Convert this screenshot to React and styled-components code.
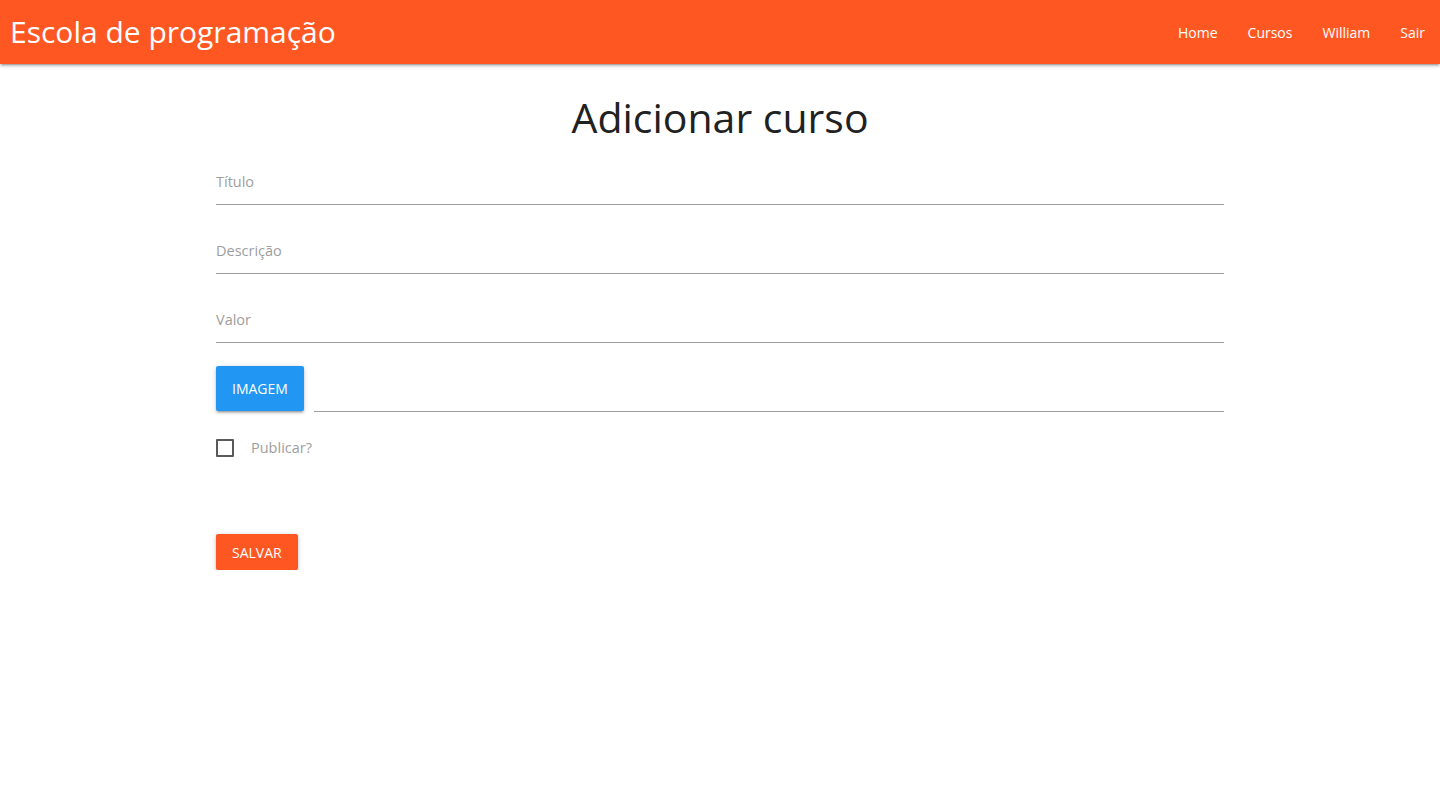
import styled, { createGlobalStyle } from "styled-components";

const colors = {
  primary: "#ff5722",
  blue: "#2196f3",
  label: "#9e9e9e",
  line: "#9e9e9e",
  text: "#212121",
};

const font = `"Open Sans", "Noto Sans", sans-serif`;

const GlobalStyle = createGlobalStyle`
  html, body {
    margin: 0;
    padding: 0;
    background: #fff;
    font-family: ${font};
    font-size: 15px;
  }
  * {
    box-sizing: border-box;
  }
`;

const Nav = styled.nav`
  height: 64px;
  background-color: ${colors.primary};
  display: flex;
  align-items: center;
  justify-content: space-between;
  box-shadow: 0 2px 2px 0 rgba(0, 0, 0, 0.14), 0 3px 1px -2px rgba(0, 0, 0, 0.12),
    0 1px 5px 0 rgba(0, 0, 0, 0.2);
  color: #fff;
`;

const Brand = styled.a`
  padding-left: 10px;
  font-size: 30px;
  color: #fff;
  text-decoration: none;
  line-height: 64px;
`;

const Links = styled.ul`
  display: flex;
  list-style: none;
  margin: 0;
  padding: 0;

  a {
    display: block;
    padding: 2px 15px 0;
    line-height: 62px;
    font-size: 14px;
    color: #fff;
    text-decoration: none;
  }
`;

const Container = styled.main`
  width: 70%;
  margin: 0 auto;
`;

const Heading = styled.h3`
  margin: 30px 0 18px;
  height: 47px;
  font-size: 41px;
  font-weight: 400;
  line-height: 47px;
  text-align: center;
  color: ${colors.text};
`;

const Field = styled.div`
  display: flex;
  align-items: flex-end;
  margin-bottom: 23px;
`;

const Input = styled.input`
  flex: 1;
  height: 46px;
  padding: 0;
  border: none;
  border-bottom: 1px solid ${colors.line};
  outline: none;
  background: transparent;
  font-family: ${font};
  font-size: 14.5px;
  color: ${colors.text};

  &::placeholder {
    color: ${colors.label};
  }
`;

const FileButton = styled.span`
  display: block;
  height: 45px;
  line-height: 45px;
  padding: 0 16px;
  margin-right: 10px;
  margin-bottom: 1px;
  border-radius: 2px;
  background-color: ${colors.blue};
  color: #fff;
  font-size: 14px;
  text-transform: uppercase;
  box-shadow: 0 2px 2px 0 rgba(0, 0, 0, 0.14), 0 3px 1px -2px rgba(0, 0, 0, 0.12),
    0 1px 5px 0 rgba(0, 0, 0, 0.2);
`;

const Check = styled.label`
  display: flex;
  align-items: center;
  height: 25px;
  margin-top: 22px;
  font-size: 14.5px;
  color: ${colors.label};
  cursor: pointer;

  span.box {
    width: 18px;
    height: 18px;
    border: 2px solid #5a5a5a;
    border-radius: 1px;
    margin-right: 17px;
  }
`;

const Button = styled.button`
  display: block;
  margin-top: 74px;
  height: 36px;
  padding: 0 16px;
  border: none;
  border-radius: 2px;
  background-color: ${colors.primary};
  color: #fff;
  font-family: ${font};
  font-size: 14px;
  text-transform: uppercase;
  box-shadow: 0 2px 2px 0 rgba(0, 0, 0, 0.14), 0 3px 1px -2px rgba(0, 0, 0, 0.12),
    0 1px 5px 0 rgba(0, 0, 0, 0.2);
  cursor: pointer;
`;

export default function App() {
  return (
    <>
      <GlobalStyle />
      <Nav>
        <Brand href="#">Escola de programação</Brand>
        <Links>
          <li><a href="#">Home</a></li>
          <li><a href="#">Cursos</a></li>
          <li><a href="#">William</a></li>
          <li><a href="#">Sair</a></li>
        </Links>
      </Nav>

      <Container>
        <Heading>Adicionar curso</Heading>

        <form onSubmit={(e) => e.preventDefault()}>
          <Field>
            <Input placeholder="Título" />
          </Field>
          <Field>
            <Input placeholder="Descrição" />
          </Field>
          <Field>
            <Input placeholder="Valor" />
          </Field>
          <Field>
            <FileButton>Imagem</FileButton>
            <Input />
          </Field>

          <Check>
            <span className="box" />
            Publicar?
          </Check>

          <Button type="submit">Salvar</Button>
        </form>
      </Container>
    </>
  );
}
